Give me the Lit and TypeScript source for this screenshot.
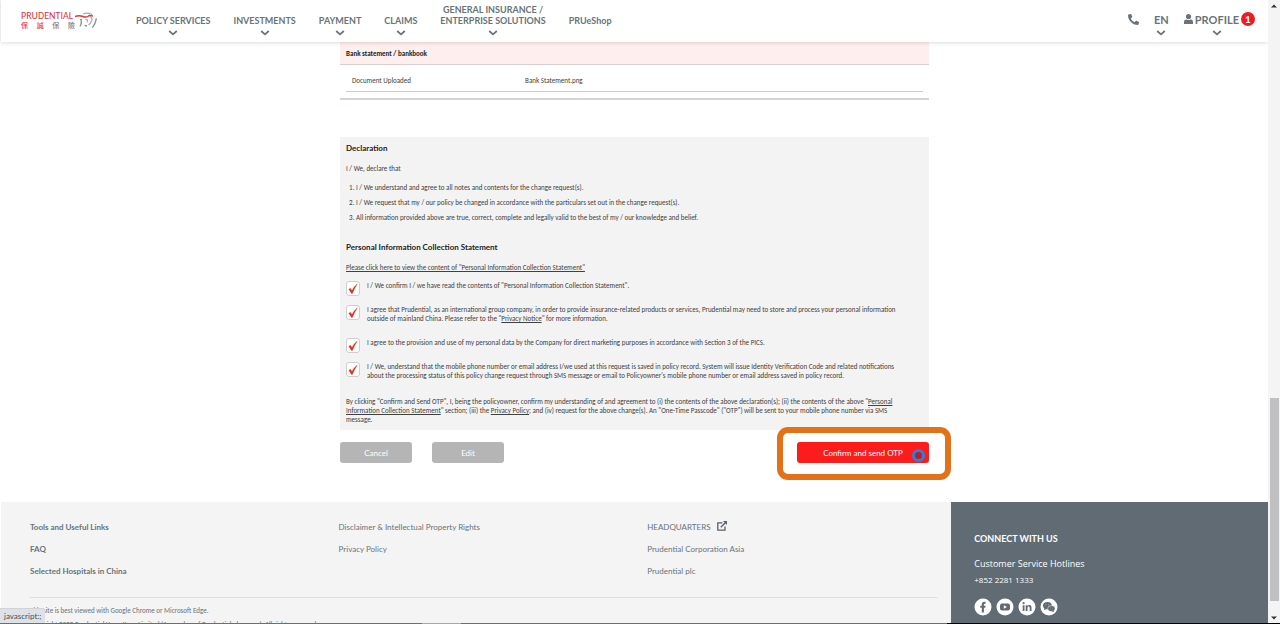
import { LitElement, html, css, svg } from "lit";
import { customElement, state } from "lit/decorators.js";

const NAV: { label: string[]; menu: boolean }[] = [
  { label: ["POLICY SERVICES"], menu: true },
  { label: ["INVESTMENTS"], menu: true },
  { label: ["PAYMENT"], menu: true },
  { label: ["CLAIMS"], menu: true },
  { label: ["GENERAL INSURANCE /", "ENTERPRISE SOLUTIONS"], menu: true },
  { label: ["PRUeShop"], menu: false },
];

const chevron = html`<svg class="chevron" viewBox="0 0 10 6" aria-hidden="true">
  <path d="M1.2 1 L5 4.4 L8.8 1" fill="none" stroke="#68737a" stroke-width="1.7" />
</svg>`;

@customElement("site-header")
class SiteHeader extends LitElement {
  static styles = css`
    :host {
      display: flex;
      align-items: flex-end;
      height: 42px;
      padding: 0 13px 6px 20px;
      box-sizing: border-box;
      background: #fff;
      box-shadow: 0 0 5px rgba(0, 0, 0, 0.2);
      position: relative;
      z-index: 2;
      font: 700 9px/11px Lato, Carlito, sans-serif;
      color: #68737a;
    }
    .logo {
      display: grid;
      grid-template-columns: 54px 22px;
      align-self: flex-end;
      margin: 0 39px 7px 0;
      text-decoration: none;
      color: #e8313b;
    }
    .word {
      font: 400 10px/10px Carlito, Lato, sans-serif;
    }
    .han {
      display: flex;
      justify-content: space-between;
      font: 500 7px/8px "Noto Sans CJK TC", sans-serif;
    }
    .grey {
      color: #777;
    }
    .face {
      width: 22px;
      height: 18px;
      grid-column: 2;
      grid-row: 1 / 3;
    }
    nav {
      display: flex;
      align-items: flex-end;
      gap: 23px;
      flex: 1;
    }
    button,
    .item {
      display: flex;
      flex-direction: column;
      align-items: center;
      gap: 4px;
      padding: 0;
      border: 0;
      background: none;
      font: inherit;
      color: inherit;
      text-decoration: none;
      white-space: nowrap;
    }
    .item {
      padding-bottom: 10px;
    }
    .chevron {
      width: 10px;
      height: 6px;
      display: block;
    }
    .tools {
      display: flex;
      align-items: flex-end;
      gap: 15px;
      font-size: 11px;
      line-height: 14px;
      font-weight: 700;
    }
    .tools button {
      gap: 3px;
    }
    .phone {
      width: 11px;
      height: 11px;
      display: block;
      padding-bottom: 11px;
    }
    .profile {
      display: flex;
      align-items: flex-end;
      gap: 2px;
    }
    .user {
      width: 9px;
      height: 10px;
      display: block;
      padding-bottom: 12px;
    }
    .badge {
      width: 14px;
      height: 14px;
      border-radius: 50%;
      background: #ed1c24;
      color: #fff;
      font: 700 10px/14px Lato, sans-serif;
      text-align: center;
      margin-bottom: 10px;
    }
  `;

  render() {
    return html`
      <a class="logo" href="#" aria-label="Prudential">
        <span class="word">PRUDENTIAL</span>
        <svg class="face" viewBox="0 0 22 18" aria-hidden="true">
          <path d="M0 5.5 Q4 4 8 5.5 T14 4.600 L18 5" fill="none" stroke="#e8313b" stroke-width="1.4" />
          <path d="M8 3 Q12 1.4 16 3 L17 4 M15 5.5 Q18 7.4 16.6 10 Q15.600 12.4 13.4 14 M10.5 8.4 l2 .6 -.4 2.4"
            fill="none" stroke="#a9adaf" stroke-width="1.2" />
          <path d="M5 9 L7 8.4 M6.400 9.600 Q6.600 12.5 5 15.5 M21.400 7.4 Q20.600 13 17.400 16.6 M9.600 14.4 l2.4 .6" fill="none" stroke="#8d9294" stroke-width="1.4" />
        </svg>
        <span class="han"><span>保</span><span>誠</span><span class="grey">保</span><span class="grey">險</span></span>
      </a>
      <nav>
        ${NAV.map((n) =>
          n.menu
            ? html`<button type="button"><span>${n.label.map((l, i) => (i ? html`<br />${l}` : l))}</span>${chevron}</button>`
            : html`<a class="item" href="#">${n.label[0]}</a>`
        )}
      </nav>
      <div class="tools">
        <a href="#" aria-label="Call us">
          <svg class="phone" viewBox="0 0 512 512" aria-hidden="true">
            <path fill="#68737a" d="M493.400 24.600l-104-24c-11.300-2.600-22.900 3.300-27.500 13.900l-48 112c-4.200 9.800-1.400 21.300 6.900 28l60.600 49.600c-36 76.700-98.900 140.500-177.200 177.200l-49.600-60.600c-6.800-8.300-18.200-11.100-28-6.900l-112 48C3.900 366.500-2 378.100.6 389.400l24 104C27.100 504.200 36.700 512 48 512c256.100 0 464-207.500 464-464 0-11.200-7.700-20.900-18.600-23.400z" transform="translate(512 0) scale(-1 1)" />
          </svg>
        </a>
        <button type="button"><span>EN</span>${chevron}</button>
        <div class="profile">
          <svg class="user" viewBox="0 0 9 10" aria-hidden="true">
            <circle cx="4.500" cy="2.600" r="2.600" fill="#68737a" />
            <path d="M0 10 V7.800 Q0 5.400 2.400 5.400 Q4.500 6.600 6.600 5.400 Q9 5.400 9 7.800 V10 Z" fill="#68737a" />
          </svg>
          <button type="button"><span>PROFILE</span>${chevron}</button>
          <span class="badge">1</span>
        </div>
      </div>
    `;
  }
}

@customElement("tick-row")
class TickRow extends LitElement {
  @state() checked = true;

  static styles = css`
    :host {
      display: block;
    }
    label {
      display: grid;
      grid-template-columns: 14px 1fr;
      column-gap: 7px;
      align-items: start;
    }
    input,
    svg {
      grid-column: 1;
      grid-row: 1;
      width: 14px;
      height: 15px;
      margin: 0;
      box-sizing: border-box;
    }
    input {
      appearance: none;
      border: 1px solid #cfcfcf;
      border-radius: 3px;
      background: #fff;
    }
    svg {
      pointer-events: none;
    }
    .text {
      padding-bottom: 15px;
    }
  `;

  render() {
    return html`<label>
      <input type="checkbox" .checked=${this.checked}
        @change=${(e: Event) => (this.checked = (e.target as HTMLInputElement).checked)} />
      ${this.checked
        ? html`<svg viewBox="0 0 14 15" aria-hidden="true">
            <path d="M2.800 8.200 L4.400 7.200 L6 9.400 Q8 5.600 11.400 2.800 Q8.600 7.400 6.400 12.400 L5.400 12.400 Z" fill="#e0301e" stroke="#e0301e" stroke-width=".3" />
          </svg>`
        : ""}
      <span class="text"><slot></slot></span>
    </label>`;
  }
}

@customElement("site-footer")
class SiteFooter extends LitElement {
  static styles = css`
    :host {
      display: grid;
      grid-template-columns: 3fr 1fr;
      background: #f4f4f4;
      font: 400 8px/12px Lato, Carlito, sans-serif;
      color: #68737a;
    }
    a {
      color: inherit;
      text-decoration: none;
    }
    .links {
      padding: 19px 0 0 29px;
    }
    .cols {
      display: grid;
      grid-template-columns: 2fr 2fr 1.96fr;
      grid-template-columns: 33.5% 33.5% 33%;
    }
    ul {
      list-style: none;
      margin: 0;
      padding: 0;
      display: grid;
      gap: 10px;
      align-content: start;
    }
    .strong {
      font-weight: 700;
    }
    .ext {
      width: 10px;
      height: 10px;
      margin-left: 6px;
      vertical-align: -1px;
    }
    .notes {
      margin: 20px 14px 0 0;
      border-top: 1px solid #dcdfdf;
      padding-top: 6px;
      font: 400 7px/14px Carlito, Lato, sans-serif;
    }
    .notes p {
      margin: 0;
    }
    .connect {
      background: #616b74;
      color: #fff;
      padding: 30px 23px 0;
    }
    h2 {
      margin: 0 0 10px;
      font: 700 9px/14px Lato, sans-serif;
    }
    .connect p {
      margin: 0;
      font: 400 9px/16px "Open Sans", sans-serif;
    }
    .connect .tel {
      font: 400 8px/16px "Open Sans", sans-serif;
    }
    .social {
      display: flex;
      gap: 4px;
      margin-top: 10px;
    }
    .social a,
    .social svg {
      display: block;
      width: 18px;
      height: 18px;
    }
  `;

  render() {
    const icon = (name: string, glyph: unknown) => html`<a href="#" aria-label=${name}>
      <svg viewBox="0 0 18 18" aria-hidden="true"><circle cx="9" cy="9" r="8.500" fill="#fff" />${glyph}</svg>
    </a>`;
    return html`
      <div class="links">
        <div class="cols">
          <ul class="strong">
            <li><a href="#">Tools and Useful Links</a></li>
            <li><a href="#">FAQ</a></li>
            <li><a href="#">Selected Hospitals in China</a></li>
          </ul>
          <ul>
            <li><a href="#">Disclaimer &amp; Intellectual Property Rights</a></li>
            <li><a href="#">Privacy Policy</a></li>
          </ul>
          <ul>
            <li><a href="#">HEADQUARTERS<svg class="ext" viewBox="0 0 10 10" aria-hidden="true">
              <path d="M5.400 1.800 H.8 V9.200 H8 V5.600 M3.800 6.200 L8.800 1.200" fill="none" stroke="#56616a" stroke-width="1.300" />
              <path d="M6 0 H10 V4 Z" fill="#56616a" />
            </svg></a></li>
            <li><a href="#">Prudential Corporation Asia</a></li>
            <li><a href="#">Prudential plc</a></li>
          </ul>
        </div>
        <div class="notes">
          <p>This site is best viewed with Google Chrome or Microsoft Edge.</p>
          <p>Copyright 2022 Prudential Hong Kong Limited (A member of Prudential plc group). All rights reserved.</p>
        </div>
      </div>
      <div class="connect">
        <h2>CONNECT WITH US</h2>
        <p>Customer Service Hotlines</p>
        <p class="tel">+852 2281 1333</p>
        <div class="social">
          ${icon("Facebook", svg`<path d="M7.800 14.600 V9.800 H6.200 V7.800 H7.800 V6.400 Q7.800 3.800 10.200 3.800 H11.600 V5.800 H10.700 Q9.900 5.800 9.900 6.600 V7.800 H11.600 L11.300 9.800 H9.900 V14.600 Z" fill="#616b74"/>`)}
          ${icon("YouTube", svg`<rect x="4" y="5.400" width="10" height="7.200" rx="2" fill="#616b74"/><path d="M7.800 7.200 L11 9 L7.800 10.800 Z" fill="#fff"/>`)}
          ${icon("LinkedIn", svg`<circle cx="5.600" cy="5.200" r="1.100" fill="#616b74"/><path d="M4.700 7.200 H6.500 V13 H4.700 Z M7.700 7.200 H9.400 V8 Q10 7 11.300 7 Q13.500 7 13.500 9.700 V13 H11.700 V10 Q11.700 8.600 10.700 8.600 Q9.500 8.600 9.500 10 V13 H7.700 Z" fill="#616b74"/>`)}
          ${icon("WeChat", svg`<ellipse cx="7.400" cy="7.600" rx="4.400" ry="3.600" fill="#616b74"/><path d="M4 12 L4.600 9.600 L7 11 Z" fill="#616b74"/><ellipse cx="11.400" cy="10.600" rx="3.700" ry="3" fill="#616b74" stroke="#fff" stroke-width=".500"/><path d="M13.800 14.200 L11.800 13.200 L13.800 12.400 Z" fill="#616b74"/><circle cx="6" cy="6.800" r=".400" fill="#fff"/><circle cx="8.800" cy="6.800" r=".400" fill="#fff"/><circle cx="10.300" cy="10" r=".300" fill="#fff"/><circle cx="12.600" cy="10" r=".300" fill="#fff"/>`)}
        </div>
      </div>
    `;
  }
}

@customElement("app-root")
class AppRoot extends LitElement {
  static styles = css`
    :host {
      display: grid;
      grid-template-columns: 1fr 12px;
      height: 100vh;
      overflow: hidden;
      position: relative;
      background: #fff;
      font: 400 7px/9px Carlito, Calibri, Lato, sans-serif;
      color: #404040;
    }
    .page {
      display: flex;
      flex-direction: column;
      min-width: 0;
      min-height: 0;
      overflow: hidden;
      padding-left: 1px;
    }
    site-header,
    main {
      flex: none;
    }
    site-footer {
      flex: 1;
      min-height: 0;
      margin-top: 39px;
    }
    main {
      width: 100%;
      max-width: 589px;
      margin: 0 auto;
    }
    .doc-head {
      margin: 0;
      padding: 7px 6px 5px;
      background: #feeeee;
      border-bottom: 1px solid #ddcfcf;
      font: 700 7px/10px Carlito, Lato, sans-serif;
      color: #222;
    }
    .doc {
      padding: 5px 6px 6px;
      border-bottom: 2px solid #d6d3d4;
    }
    table {
      width: 100%;
      border-collapse: collapse;
      border-bottom: 1px solid #ccc;
    }
    th,
    td {
      padding: 6px 6px 5px;
      font-weight: 400;
      line-height: 10px;
      text-align: left;
    }
    th {
      width: 30%;
      padding-right: 0;
      box-sizing: border-box;
    }
    .declaration {
      margin-top: 37px;
      padding: 6px;
      background: #f3f3f3;
    }
    h3 {
      margin: 0 0 11px;
      font: 700 8px/10px Lato, Carlito, sans-serif;
      color: #222;
    }
    p {
      margin: 0;
    }
    .lead {
      line-height: 10px;
    }
    ol {
      margin: 6px 0 17px;
      padding: 0 0 0 10px;
      line-height: 15px;
    }
    a {
      color: inherit;
    }
    .view {
      line-height: 10px;
      margin-bottom: 8px;
    }
    .closing {
      margin-top: 2px;
    }
    .actions {
      display: flex;
      gap: 20px;
      margin-top: 12px;
    }
    .actions button {
      width: 72px;
      height: 21px;
      padding: 0;
      border: 0;
      border-radius: 3px;
      background: #b5b5b5;
      color: #fff;
      font: 400 8px/20px Lato, Carlito, sans-serif;
    }
    .confirm {
      position: relative;
      margin-left: auto;
    }
    .confirm button {
      display: block;
      width: 132px;
      background: #fc1c1c;
    }
    .ring {
      position: absolute;
      inset: -15px -22px -17px -20px;
      border: 6px solid #e2711a;
      border-radius: 11px;
      pointer-events: none;
    }
    .busy {
      position: absolute;
      right: 4px;
      bottom: 1px;
      width: 7px;
      height: 7px;
      border: 3px solid #2f7fd6;
      border-radius: 50%;
      background: #b3202c;
    }
    .scroll {
      display: flex;
      flex-direction: column;
      align-items: center;
      background: #f4f4f4;
      padding: 4px 0;
      box-sizing: border-box;
      min-height: 0;
    }
    .scroll svg {
      width: 6px;
      height: 4px;
      flex: none;
    }
    .thumb {
      width: 9px;
      height: 33%;
      margin: auto 0 15px;
      background: #c0bfc1;
    }
    .status {
      position: absolute;
      left: 0;
      bottom: 1px;
      width: 45px;
      box-sizing: border-box;
      padding: 0 4px;
      background: #dee1e6;
      border-top: 1px solid #cfd2d6;
      border-radius: 0 3px 0 0;
      font: 400 8px/14px Lato, Carlito, sans-serif;
      color: #4a4f54;
    }
    .taskbar {
      position: absolute;
      left: 0;
      right: 0;
      bottom: 0;
      height: 1px;
      background: linear-gradient(90deg, #6f7060 33%, #e0a040 33%, #e0a040 36%, #6f7060 36%, #6f7060 74%, #000 74%);
    }
  `;

  render() {
    return html`
      <div class="page">
        <site-header></site-header>
        <main>
          <h2 class="doc-head">Bank statement / bankbook</h2>
          <div class="doc">
            <table>
              <tr>
                <th scope="row">Document Uploaded</th>
                <td>Bank Statement.png</td>
              </tr>
            </table>
          </div>
          <section class="declaration">
            <h3>Declaration</h3>
            <p class="lead">I / We, declare that</p>
            <ol>
              <li>I / We understand and agree to all notes and contents for the change request(s).</li>
              <li>I / We request that my / our policy be changed in accordance with the particulars set out in the change request(s).</li>
              <li>All information provided above are true, correct, complete and legally valid to the best of my / our knowledge and belief.</li>
            </ol>
            <h3>Personal Information Collection Statement</h3>
            <p class="view"><a href="#">Please click here to view the content of "Personal Information Collection Statement"</a></p>
            <tick-row>I / We confirm I / we have read the contents of "Personal Information Collection Statement".</tick-row>
            <tick-row>I agree that Prudential, as an international group company, in order to provide insurance-related products or services, Prudential may need to store and process your personal information<br />outside of mainland China. Please refer to the "<a href="#">Privacy Notice</a>" for more information.</tick-row>
            <tick-row>I agree to the provision and use of my personal data by the Company for direct marketing purposes in accordance with Section 3 of the PICS.</tick-row>
            <tick-row>I / We, understand that the mobile phone number or email address I/we used at this request is saved in policy record. System will issue Identity Verification Code and related notifications<br />about the processing status of this policy change request through SMS message or email to Policyowner's mobile phone number or email address saved in policy record.</tick-row>
            <p class="closing">By clicking "Confirm and Send OTP", I, being the policyowner, confirm my understanding of and agreement to (i) the contents of the above declaration(s); (ii) the contents of the above "<a href="#">Personal<br />Information Collection Statement</a>" section; (iii) the <a href="#">Privacy Policy</a>; and (iv) request for the above change(s). An "One-Time Passcode" ("OTP") will be sent to your mobile phone number via SMS<br />message.</p>
          </section>
          <div class="actions">
            <button type="button">Cancel</button>
            <button type="button">Edit</button>
            <div class="confirm">
              <button type="button">Confirm and send OTP</button>
              <span class="busy"></span>
              <span class="ring"></span>
            </div>
          </div>
        </main>
        <site-footer></site-footer>
      </div>
      <div class="scroll" aria-hidden="true">
        <svg viewBox="0 0 6 4"><path d="M0 3.500 L3 .5 L6 3.500 Z" fill="#333" /></svg>
        <div class="thumb"></div>
        <svg viewBox="0 0 6 4"><path d="M0 .5 L3 3.500 L6 .5 Z" fill="#333" /></svg>
      </div>
      <div class="status">javascript:;</div>
      <div class="taskbar"></div>
    `;
  }
}
